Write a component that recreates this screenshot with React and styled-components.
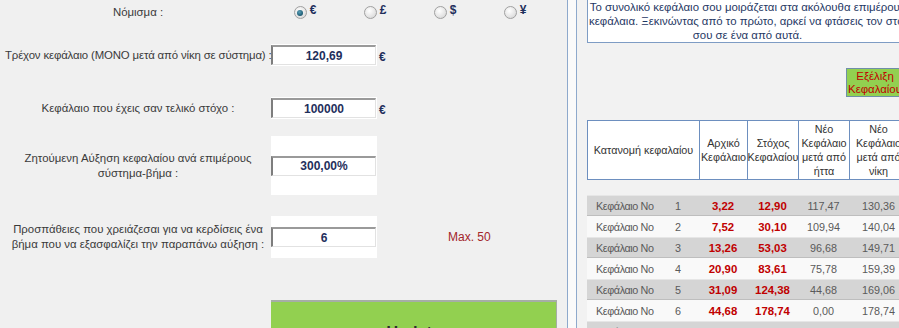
import React from 'react';
import styled, { createGlobalStyle } from 'styled-components';

const GlobalStyle = createGlobalStyle`
  html, body {
    margin: 0;
    padding: 0;
    background: #fafafa;
    overflow: hidden;
  }
  body {
    font-family: "Liberation Sans", Arial, sans-serif;
    font-size: 11.4px;
  }
`;

const Page = styled.div`
  display: flex;
  width: 940px;
  height: 328px;
  overflow: hidden;
`;

const LeftPanel = styled.div`
  width: 567px;
  flex-shrink: 0;
  background: #f0f0f0;
  border-right: 1px solid #8ea9cc;
  color: #3a3a3a;
`;

const Gap = styled.div`
  width: 8px;
  flex-shrink: 0;
  background: #fafafa;
`;

const RightPanel = styled.div`
  flex: 1;
  background: #f2f2f2;
  border-left: 1px solid #8ea9cc;
  padding-left: 10px;
`;

const RightColumn = styled.div`
  width: 321px;
  display: flex;
  flex-direction: column;
`;

const FormRow = styled.div`
  display: grid;
  grid-template-columns: 271px 106px 1fr;
  align-items: center;
  height: ${p => p.$height}px;
  margin-top: ${p => p.$top}px;
`;

const Label = styled.div`
  text-align: center;
  line-height: 15px;
  padding-left: 5px;
  white-space: nowrap;
  letter-spacing: ${p => (p.$tight ? '-0.14px' : '0')};
`;

const InputCell = styled.div`
  background: #fff;
  align-self: stretch;
  display: flex;
  align-items: center;
`;

const Field = styled.input`
  width: 105px;
  height: 20px;
  box-sizing: border-box;
  border-top: 2px solid #9a9a9a;
  border-left: 2px solid #7d7d7d;
  border-right: 1px solid #e2e2e2;
  border-bottom: 1px solid #e2e2e2;
  background: #fff;
  text-align: center;
  font-family: inherit;
  font-size: 12px;
  font-weight: bold;
  color: #1f2f5c;
  padding: 0;
  outline: none;
`;

const Unit = styled.span`
  font-weight: bold;
  font-size: 12px;
  color: #1f2f5c;
  padding-left: 2px;
  margin-top: 4px;
`;

const Note = styled.span`
  color: #a3262a;
  font-size: 12px;
  margin-left: 71px;
`;

const RadioGroup = styled.div`
  display: grid;
  grid-template-columns: repeat(4, 70px);
  grid-column: 2 / 4;
`;

const RadioItem = styled.label`
  display: flex;
  align-items: center;
  justify-content: center;
  gap: 3px;
  padding-right: 2px;
`;

const Radio = styled.span`
  width: 11px;
  height: 11px;
  border-radius: 50%;
  border: 1px solid #a0a0a0;
  background: radial-gradient(circle at 40% 35%, #ffffff 0%, #e4e4e4 60%, #cfcfcf 100%);
  display: flex;
  align-items: center;
  justify-content: center;
  &::after {
    content: '';
    width: 6px;
    height: 6px;
    border-radius: 50%;
    background: radial-gradient(circle at 40% 35%, #5aa0b8 0%, #1c5a72 70%, #123f52 100%);
    display: ${p => (p.$checked ? 'block' : 'none')};
  }
`;

const Symbol = styled.span`
  font-weight: bold;
  font-size: 12px;
  color: #1f2f5c;
  margin-top: -6px;
`;

const UpdateButton = styled.button`
  display: block;
  margin: 42px 0 0 271px;
  width: 286px;
  height: 64px;
  background: #92d050;
  border: none;
  border-top: 2px solid #a6aea6;
  border-right: 1px solid #a6aea6;
  font-family: inherit;
  font-size: 16px;
  font-weight: bold;
  color: #2c2c2c;
  padding: 0;
`;

const InfoBox = styled.div`
  background: #fff;
  border: 1px solid #7e9cc4;
  border-top: none;
  color: #1f3864;
  text-align: center;
  line-height: 14px;
  white-space: nowrap;
  padding: 0 1px;
`;

const GrowthButton = styled.button`
  align-self: flex-end;
  margin: 25px 4px 0 0;
  width: 58px;
  height: 29px;
  background: #92d050;
  border: 1px solid #6f8fa8;
  color: #c00000;
  font-family: inherit;
  font-size: 11.4px;
  line-height: 13px;
  padding: 0;
  white-space: nowrap;
  overflow: hidden;
`;

const HeadGrid = styled.div`
  display: grid;
  grid-template-columns: 112px 48px 51px 51px 58px;
  margin-top: 23px;
  border-top: 1px solid #6d8fbf;
  border-left: 1px solid #6d8fbf;
  background: #fff;
  height: 60px;
  box-sizing: border-box;
  font-size: 10.8px;
`;

const HeadCell = styled.div`
  border-right: 1px solid #6d8fbf;
  border-bottom: 1px solid #6d8fbf;
  display: flex;
  align-items: center;
  justify-content: center;
  text-align: center;
  line-height: 14px;
  color: #333;
  white-space: nowrap;
`;

const Body = styled.div`
  margin-top: 15px;
  font-size: 10.8px;
`;

const DataRow = styled.div`
  display: grid;
  grid-template-columns: 70px 42px 48px 51px 51px 59px;
  align-items: center;
  height: 21px;
  box-sizing: border-box;
  background: ${p => (p.$shaded ? '#d5d5d5' : '#f9f9f9')};
  border-top: 1px solid ${p => (p.$shaded ? '#e6e6e6' : '#f9f9f9')};
  border-bottom: 1px solid ${p => (p.$shaded ? '#bebebe' : '#f9f9f9')};
  color: #5a5a5a;
`;

const Cell = styled.span`
  text-align: ${p => (p.$left ? 'left' : 'center')};
  padding-left: ${p => (p.$left ? '9px' : '0')};
  color: ${p => (p.$red ? '#c00000' : 'inherit')};
  font-weight: ${p => (p.$red ? 'bold' : 'normal')};
  font-size: ${p => (p.$red ? '11.4px' : 'inherit')};
  letter-spacing: ${p => (p.$left ? '-0.4px' : '0')};
  white-space: nowrap;
`;

const currencies = [
  { symbol: '€', checked: true },
  { symbol: '£' },
  { symbol: '$' },
  { symbol: '¥' },
];

const rows = [
  ['1', '3,22', '12,90', '117,47', '130,36'],
  ['2', '7,52', '30,10', '109,94', '140,04'],
  ['3', '13,26', '53,03', '96,68', '149,71'],
  ['4', '20,90', '83,61', '75,78', '159,39'],
  ['5', '31,09', '124,38', '44,68', '169,06'],
  ['6', '44,68', '178,74', '0,00', '178,74'],
  ['7', '', '', '', ''],
];

const App = () => {
  return (
    <>
      <GlobalStyle />
      <Page>
        <LeftPanel>
          <FormRow $height={25} $top={0}>
            <Label>Νόμισμα :</Label>
            <RadioGroup>
              {currencies.map(c => (
                <RadioItem key={c.symbol}>
                  <Radio $checked={c.checked} />
                  <Symbol>{c.symbol}</Symbol>
                </RadioItem>
              ))}
            </RadioGroup>
          </FormRow>

          <FormRow $height={22} $top={19}>
            <Label $tight>Τρέχον κεφάλαιο (ΜΟΝΟ μετά από νίκη σε σύστημα) :</Label>
            <InputCell><Field defaultValue="120,69" /></InputCell>
            <Unit>€</Unit>
          </FormRow>

          <FormRow $height={22} $top={31}>
            <Label>Κεφάλαιο που έχεις σαν τελικό στόχο :</Label>
            <InputCell><Field defaultValue="100000" /></InputCell>
            <Unit>€</Unit>
          </FormRow>

          <FormRow $height={59} $top={17}>
            <Label>Ζητούμενη Αύξηση κεφαλαίου ανά επιμέρους<br />σύστημα-βήμα :</Label>
            <InputCell><Field defaultValue="300,00%" /></InputCell>
          </FormRow>

          <FormRow $height={42} $top={21}>
            <Label>Προσπάθειες που χρειάζεσαι για να κερδίσεις ένα<br />βήμα που να εξασφαλίζει την παραπάνω αύξηση :</Label>
            <InputCell><Field defaultValue="6" /></InputCell>
            <Note>Max. 50</Note>
          </FormRow>

          <UpdateButton>Update</UpdateButton>
        </LeftPanel>

        <Gap />

        <RightPanel>
          <RightColumn>
            <InfoBox>
              Το συνολικό κεφάλαιο σου μοιράζεται στα ακόλουθα επιμέρους<br />
              κεφάλαια. Ξεκινώντας από το πρώτο, αρκεί να φτάσεις τον στόχο<br />
              σου σε ένα από αυτά.
            </InfoBox>

            <GrowthButton>Εξέλιξη<br />Κεφαλαίου</GrowthButton>

            <HeadGrid>
              <HeadCell>Κατανομή κεφαλαίου</HeadCell>
              <HeadCell>Αρχικό<br />Κεφάλαιο</HeadCell>
              <HeadCell>Στόχος<br />Κεφαλαίου</HeadCell>
              <HeadCell>Νέο<br />Κεφάλαιο<br />μετά από<br />ήττα</HeadCell>
              <HeadCell>Νέο<br />Κεφάλαιο<br />μετά από<br />νίκη</HeadCell>
            </HeadGrid>

            <Body>
              {rows.map((r, i) => (
                <DataRow key={r[0]} $shaded={i % 2 === 0}>
                  <Cell $left>Κεφάλαιο Νο</Cell>
                  <Cell>{r[0]}</Cell>
                  <Cell $red>{r[1]}</Cell>
                  <Cell $red>{r[2]}</Cell>
                  <Cell>{r[3]}</Cell>
                  <Cell>{r[4]}</Cell>
                </DataRow>
              ))}
            </Body>
          </RightColumn>
        </RightPanel>
      </Page>
    </>
  );
};

export default App;
